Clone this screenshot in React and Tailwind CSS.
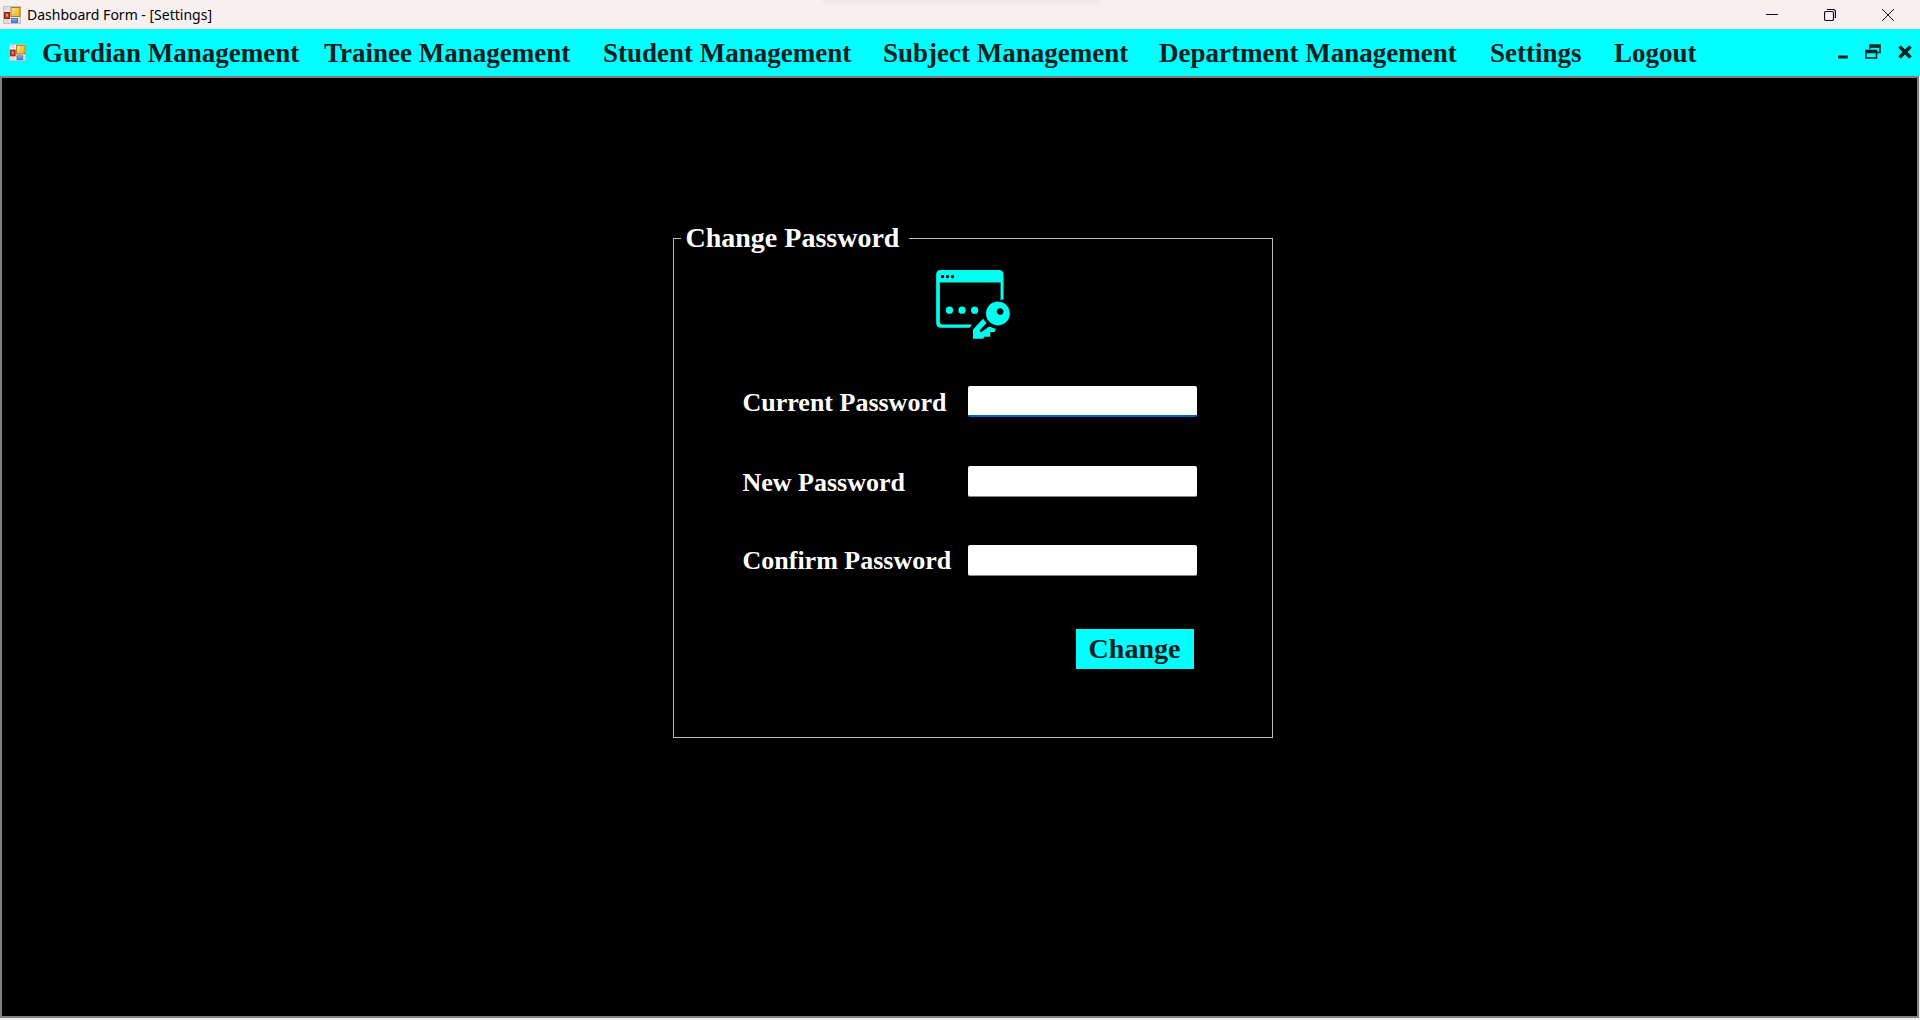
const menu = [
  "Gurdian Management",
  "Trainee Management",
  "Student Management",
  "Subject Management",
  "Department Management",
  "Settings",
  "Logout",
];

const fields = [
  { id: "current", label: "Current Password", rowClass: "pt-1", inputClass: "border-b-2 border-b-[#0067b8] bg-white" },
  { id: "new", label: "New Password", rowClass: "pt-1", inputClass: "border-b border-b-[#868686] bg-white" },
  { id: "confirm", label: "Confirm Password", rowClass: "", inputClass: "border-b border-b-[#868686] bg-white" },
];

function FormIcon({ className }) {
  return (
    <svg viewBox="0 0 18 18" className={className} aria-hidden="true">
      <defs>
        <linearGradient id="gold" x1="0" y1="0" x2="1" y2="1">
          <stop offset="0" stopColor="#ffe98a" />
          <stop offset="1" stopColor="#e9ac0c" />
        </linearGradient>
        <linearGradient id="blue" x1="0" y1="0" x2="0" y2="1">
          <stop offset="0" stopColor="#8fc0ff" />
          <stop offset="1" stopColor="#2f6fdc" />
        </linearGradient>
      </defs>
      <rect x="0.5" y="0.5" width="17" height="17" fill="#dcdcdc" stroke="#c2c2c2" />
      <path d="M1 5H7M7 1V17M7 12H17" stroke="#f5f5f5" />
      <rect x="8" y="1.5" width="9" height="9" fill="url(#gold)" stroke="#a88018" />
      <rect x="1.5" y="6.5" width="5" height="6" fill="#d43a32" stroke="#8c1c18" />
      <rect x="3" y="8" width="2" height="2.5" fill="#f08a7c" />
      <rect x="8.5" y="12.5" width="6" height="4" fill="url(#blue)" stroke="#4b76c4" />
    </svg>
  );
}

function PasswordIcon() {
  return (
    <svg viewBox="108 60 222 208" className="h-[69px] w-[74px]" fill="#00ffee" aria-hidden="true">
      <path
        fillRule="evenodd"
        d="M122 60H297Q311 60 311 74V148Q306 150 302 151V98H119V217Q119 224 126 224H216L209 234H124Q108 234 108 218V74Q108 60 122 60ZM127 75a5 5 0 1 0 .1 0ZM142 75a5 5 0 1 0 .1 0ZM157 75a5 5 0 1 0 .1 0Z"
      />
      <circle cx="148" cy="181" r="11" />
      <circle cx="186" cy="181" r="11" />
      <circle cx="224" cy="181" r="11" />
      <path fillRule="evenodd" d="M294 155a36 36 0 1 0 .1 0ZM301 175a10 10 0 1 1-.1 0Z" />
      <path d="M249 207L219 239V267H250L253 261H271V247H284L288 238L268 230L243 248L239 242L260 220Z" />
    </svg>
  );
}

function TitleBar() {
  return (
    <header className="flex h-[29px] items-center justify-between bg-[#f8f0f0]">
      <div className="flex items-center gap-[6px] pl-[3px]">
        <FormIcon className="size-[18px]" />
        <h1 className="font-['Noto_Sans',sans-serif] text-[14px] leading-5 text-black">
          Dashboard Form - [Settings]
        </h1>
      </div>
      <div className="mr-auto ml-[610px] h-[3px] w-[280px] self-start rounded-b-md bg-[#eee5e5] blur-[1px]" />
      <div className="flex pr-[3px]">
        <button type="button" aria-label="Minimize" className="flex h-7 w-[58px] items-center justify-center">
          <svg viewBox="0 0 12 12" className="size-3" stroke="#111"><path d="M0 5.5H12" /></svg>
        </button>
        <button type="button" aria-label="Restore" className="flex h-7 w-[58px] items-center justify-center">
          <svg viewBox="0 0 12 12" className="size-3" fill="none" stroke="#111" strokeWidth="1.2">
            <rect x="0.5" y="2.5" width="9" height="9" rx="1.5" />
            <path d="M3 0.5H9Q11.5 0.5 11.5 3V9" />
          </svg>
        </button>
        <button type="button" aria-label="Close" className="flex h-7 w-[58px] items-center justify-center">
          <svg viewBox="0 0 12 12" className="size-3" stroke="#111"><path d="M0 0L12 12M12 0L0 12" /></svg>
        </button>
      </div>
    </header>
  );
}

function MenuBar() {
  return (
    <nav className="flex h-[47px] items-center bg-[#00ffff] pr-2">
      <FormIcon className="ml-[9px] size-[17px] shrink-0" />
      <ul className="ml-4 grid grid-cols-[282px_279px_280px_276px_331px_124px_auto] text-[27px] leading-8 font-bold text-[#08201f]">
        {menu.map((item) => (
          <li key={item}>
            <button type="button" className="whitespace-nowrap">{item}</button>
          </li>
        ))}
      </ul>
      <div className="ml-auto flex items-center gap-[17px] pb-[2px]">
        <button type="button" aria-label="Minimize child window">
          <svg viewBox="0 0 10 14" className="h-[14px] w-[10px]"><path d="M0 12H10" stroke="#08201f" strokeWidth="3" /></svg>
        </button>
        <button type="button" aria-label="Restore child window">
          <svg viewBox="0 0 16 15" className="h-[15px] w-4" fill="none" stroke="#08201f" strokeWidth="1.5">
            <path d="M5 5V1H15V8.5H12M1 6.5H11.5V14H1Z" />
            <path d="M5 2.5H15M1 8H11.5" strokeWidth="2.5" />
          </svg>
        </button>
        <button type="button" aria-label="Close child window">
          <svg viewBox="0 0 14 14" className="size-[14px]" stroke="#08201f" strokeWidth="3.5"><path d="M1.5 1.5L12.5 12.5M12.5 1.5L1.5 12.5" /></svg>
        </button>
      </div>
    </nav>
  );
}

export default function App() {
  return (
    <div className="flex min-h-screen flex-col bg-[#f0f0f0] pb-[2px] font-['Liberation_Serif',serif]">
      <TitleBar />
      <MenuBar />
      <main className="mr-[1px] flex flex-1 items-start justify-center border-2 border-[#808080] bg-black pt-[144px] pl-[26px]">
        <form onSubmit={(e) => e.preventDefault()} className="w-[600px]">
          <fieldset className="border border-[#bdbdbd] pr-3 pb-[68px] pl-[69px]">
            <legend className="-ml-[62px] pr-[10px] pl-[5px] text-[28px] leading-8 font-bold text-white">
              Change Password
            </legend>
            <div className="ml-[193px] pt-4">
              <PasswordIcon />
            </div>
            <div className="mt-[46px] flex flex-col gap-[49px]">
              {fields.map(({ id, label, rowClass, inputClass }) => (
                <div key={id} className="grid h-[31px] grid-cols-[225px_229px] items-center">
                  <label htmlFor={id} className={`text-[26px] leading-7 font-bold whitespace-nowrap text-white ${rowClass}`}>
                    {label}
                  </label>
                  <input id={id} type="password" className={`h-[31px] w-full rounded-[2px] px-2 text-black outline-none ${inputClass}`} />
                </div>
              ))}
            </div>
            <button
              type="submit"
              className="mt-[53px] ml-[333px] block h-10 w-[118px] bg-[#00ffff] text-[28px] leading-8 font-bold text-[#08201f]"
            >
              Change
            </button>
          </fieldset>
        </form>
      </main>
    </div>
  );
}
